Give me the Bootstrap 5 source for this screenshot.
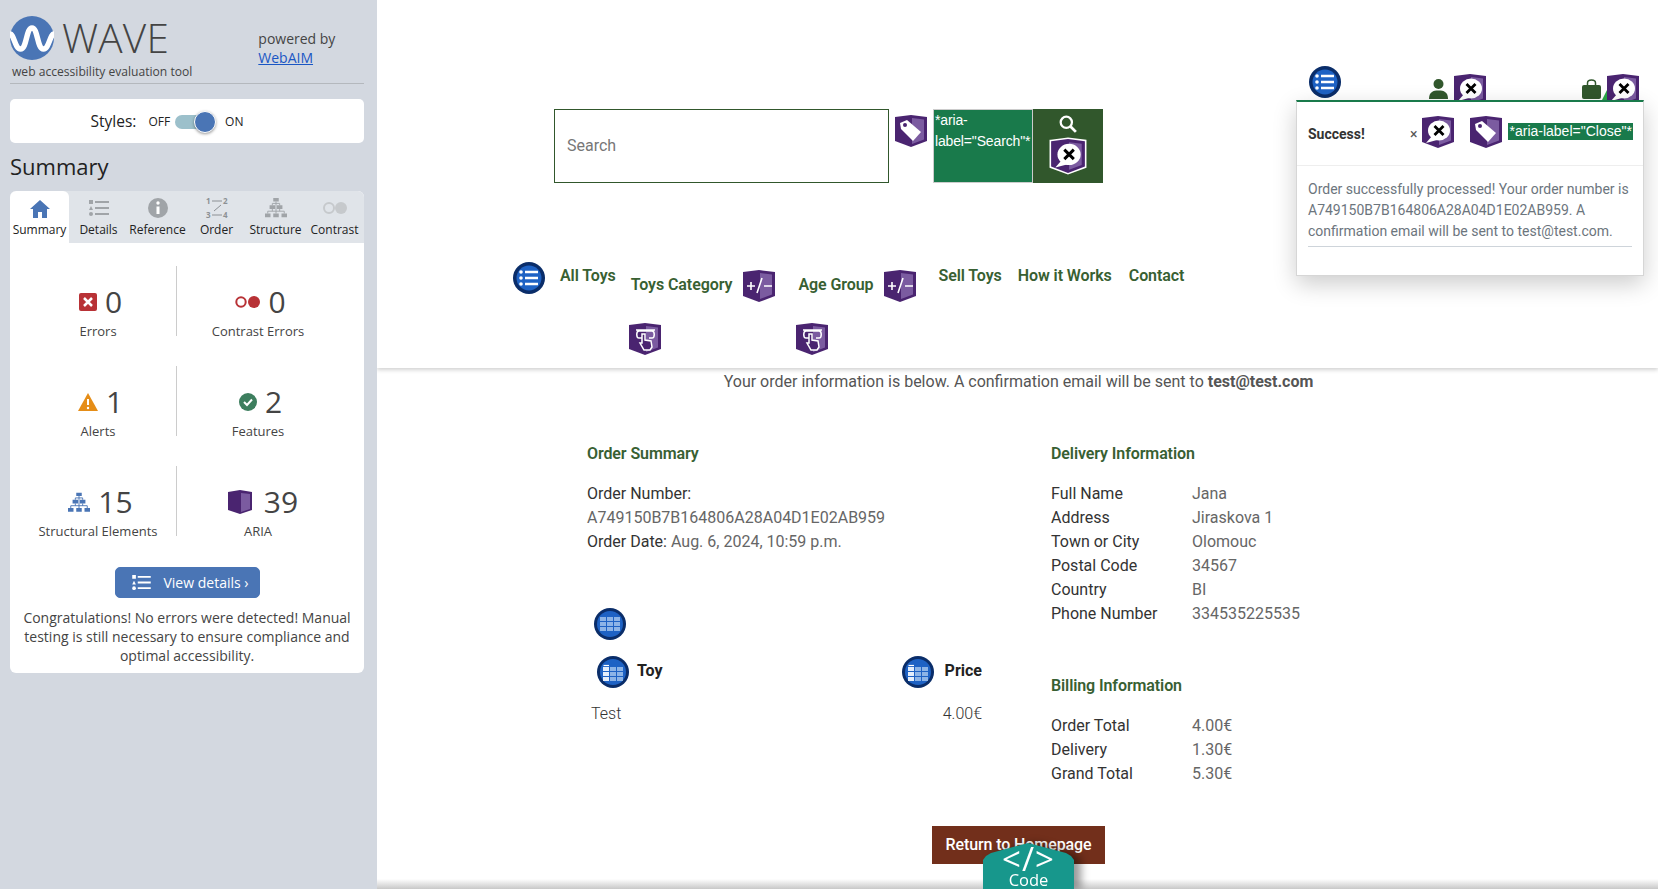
<!DOCTYPE html>
<html lang="en">
<head>
    <meta charset="UTF-8">
    <meta name="viewport" content="width=device-width, initial-scale=1.0">
    <title>Order confirmation - WAVE</title>
    <link href="https://cdn.jsdelivr.net/npm/bootstrap@5.3.0/dist/css/bootstrap.min.css" rel="stylesheet">
    <style>
        html, body { height: 100%; overflow: hidden; }
        body { font-family: Roboto, "Liberation Sans", sans-serif; color: #555; background: #fff; }

        /* WAVE sidebar */
        .wave-side { width: 377px; height: 889px; flex: none; background: #d3d8e0; padding: 0 13px 0 10px; font-family: "Open Sans", "Liberation Sans", sans-serif; color: #333; }
        .wave-brand { height: 84px; border-bottom: 1px solid #b4b8bd; position: relative; }
        .wave-logo { padding-top: 15px; }
        .wave-name { font-size: 40.500px; font-weight: 300; line-height: 44px; color: #444; margin: 1px 0 0 8px; letter-spacing: .2px; }
        .wave-sub { font-size: 12.100px; line-height: 16px; color: #444; margin: -4px 0 0 2px; }
        .wave-power { margin-left: 66px; padding-top: 29px; font-size: 14px; line-height: 19px; color: #444; }
        .wave-power a { color: #1a56c4; }
        .style-box { height: 44px; margin-top: 15px; padding: 1px 40px 0 0; background: #fff; border-radius: 5px; font-size: 12px; color: #222; }
        .style-box .lbl { font-size: 15.500px; margin-right: 12px; }
        .switch-track { width: 29px; height: 14px; margin: 0 21px 0 5px; background: #9cc0cb; border-radius: 7px; position: relative; }
        .switch-knob { position: absolute; right: -12px; top: -4px; width: 22px; height: 22px; border-radius: 50%; background: #4a75b5; border: 1px solid #fff; box-shadow: 0 1px 3px rgba(0,0,0,.4); }
        .side-title { font-size: 22px; font-weight: 400; line-height: 30px; margin: 8px 0 10px; color: #222; }
        .side-panel { background: #fff; border-radius: 6px; height: 482px; overflow: hidden; }
        .tab-strip { height: 52px; background: #e0e4e9; }
        .tab-item { width: 59px; text-align: center; font-size: 12px; line-height: 16px; color: #222; padding-top: 6px; white-space: nowrap; }
        .tab-item svg { display: block; margin: 0 auto 3px; height: 22px; }
        .tab-item.is-on { background: #fff; border-radius: 6px 6px 0 0; }
        .stat-grid { display: grid; grid-template-columns: 157px 162px; grid-auto-rows: 70px; row-gap: 30px; margin: 23px 0 0 10px; }
        .stat-cell { text-align: center; font-size: 13px; color: #444; }
        .stat-cell:nth-child(odd) { border-right: 1px solid #ccc; }
        .stat-num { display: flex; justify-content: center; align-items: center; gap: 8px; padding-left: 5px; font-size: 30px; line-height: 40px; margin-top: 16px; color: #444; height: 40px; }
        .stat-num.wide-mark { padding-left: 10px; }
        .stat-lbl { line-height: 16px; margin-top: 1px; }
        .btn-details { width: 145px; height: 31px; margin: 31px auto 0; padding: 0 0 1px 7px; background: #4a75b5; border-color: #4a75b5; color: #fff; font-size: 14px; border-radius: 5px; gap: 12px; }
        .side-note { font-size: 14px; line-height: 19px; text-align: center; margin: 10px 10px 0; color: #444; }

        /* page */
        .page-main { flex: 1; height: 889px; overflow: hidden; position: relative; }
        .page-head { height: 368px; box-shadow: 0 2px 4px rgba(0,0,0,.18); }
        .top-row { height: 109px; padding: 66px 0 0 932px; }
        .top-user { margin-left: 88px; padding-top: 13px; }
        .top-bag { margin-left: 96px; padding-top: 13px; position: relative; }
        .top-user .top-mark, .top-bag .top-mark { margin: -5px 0 0 6px; }
        .bag-pointer { position: absolute; left: 20px; top: 24px; }
        .search-row { margin-left: 177px; height: 74px; }
        .search-field { width: 335px; height: 74px; border: 1px solid #31572c; border-radius: 0; padding: 0 0 1px 12px; font-size: 16px; }
        .search-field::placeholder { color: #777; }
        .search-tag { margin: 6px; flex: none; }
        .aria-text { background: #197a4b; color: #fff; font-family: "Liberation Sans", sans-serif; font-size: 14px; letter-spacing: -.15px; }
        .aria-box { width: 100px; height: 74px; border: 1px solid #ccc; line-height: 21px; padding: 0 0 0 1px; overflow: hidden; }
        .search-btn { width: 70px; height: 74px; padding: 6px 0 0; border: 0; border-radius: 0; background: #31572c; }
        .site-nav { margin: 80px 0 0 136px; color: #386032; font-size: 16px; font-weight: 600; letter-spacing: -.08px; }
        .site-nav a { color: inherit; text-decoration: none; white-space: nowrap; }
        .nav-icon { margin-top: -1px; }
        .nav-text { line-height: 24px; padding-top: 1px; }
        .nav-drop { padding-top: 7px; }
        .nav-drop .nav-text { padding-top: 3px; }
        .nav-mark { margin-left: 11px; }
        .menu-mark { margin: 21px 0 0 -2px; }

        .intro-line { line-height: 24px; padding: 2px 0 0 2px; }
        .order-wrap { padding-left: 210px; margin-top: 48px; }
        .block-title { color: #386032; font-size: 16px; font-weight: 600; letter-spacing: -.1px; line-height: 24px; margin: 0 0 16px; }
        .order-lines { line-height: 24px; width: 300px; margin: 0; color: #666; }
        .order-lines b, .info-grid dt { font-weight: 400; color: #333; }
        .info-grid { display: grid; grid-template-columns: 141px auto; line-height: 24px; margin: 0; color: #666; }
        .info-grid dt, .info-grid dd { margin: 0; }
        .toy-table { width: 395px; margin-top: 16px; }
        .toy-table th { padding: 0 0 0 10px; height: 32px; color: #222; font-weight: 700; white-space: nowrap; }
        .toy-table td { padding: 14px 0 0 4px; line-height: 24px; font-weight: 300; color: #333; }
        .price-mark { margin-right: 11px; }
        .return-wrap { padding-left: 2px; }
        .return-btn { width: 173px; height: 38px; padding: 0; border: 0; border-radius: 0; background: #722f1b; color: #fff; font-size: 16px; font-weight: 500; letter-spacing: -.1px; margin-top: 40px; }

        /* overlays */
        .order-toast { position: absolute; left: 919px; top: 100px; width: 348px; height: 176px; background: #fff; border: 1px solid #d6d6d6; border-top: 2px solid #197a4b; border-radius: 0; box-shadow: 0 8px 22px rgba(0,0,0,.2); z-index: 5; font-size: 14px; }
        .order-toast .toast-header { height: 64px; padding: 1px 0 0 11px; color: #333; border-bottom: 1px solid #eee; border-radius: 0; background: #fff; }
        .order-toast .toast-header svg { margin-top: -4px; }
        .toast-title { width: 102px; }
        .toast-x { font-size: 14px; color: #555; margin: 0 5px 0 0; }
        .close-label { height: 17px; line-height: 16px; padding: 0 1px; margin: -5px 0 0 6px; white-space: nowrap; letter-spacing: 0; }
        .toast-copy { margin: 13px 11px 0; padding-bottom: 4px; line-height: 21px; color: #6c757d; border-bottom: 1px solid #ced4da; }
        .foot-fade { position: absolute; left: 0; right: 0; bottom: 0; height: 10px; background: linear-gradient(#fff, #c8c8c8); }
        .code-shadow { position: absolute; left: 606px; bottom: 0; filter: drop-shadow(7px 0 4px rgba(0,0,0,.4)); z-index: 4; }
        .code-tab { width: 91px; height: 46px; padding-top: 4px; background: #17978c; color: #fff; text-align: center; font-family: "Open Sans", sans-serif; clip-path: polygon(0 17px, 3px 13px, 8px 10px, 45px 0, 83px 10px, 88px 13px, 91px 17px, 91px 46px, 0 46px); }
        .code-mark { font-size: 33px; line-height: 24px; height: 24px; letter-spacing: 1px; }
        .code-word { font-size: 16.500px; line-height: 17px; }
    </style>
</head>
<body>
    <svg width="0" height="0" class="position-absolute">
        <defs>
            <g id="shield">
                <path d="M0 2 16 0 32 2V26L16 32 0 26Z" fill="#4a2470"/>
                <path d="M17 3 29 4.500V24.500L17 29Z" fill="#7b5ba0"/>
            </g>
            <symbol id="aria-tag" viewBox="0 0 32 32">
                <use href="#shield"/>
                <path d="M5 8 12 5 26 17 18 26 6 14Z" fill="#fff"/>
                <circle cx="10" cy="10" r="2" fill="#4a2470"/>
            </symbol>
            <symbol id="aria-close" viewBox="0 0 32 32">
                <use href="#shield"/>
                <ellipse cx="17" cy="14.500" rx="11" ry="10" fill="#fff"/>
                <path d="M10 20 4 27 15 24Z" fill="#fff"/>
                <path d="M12.500 10 21.500 19M21.500 10 12.500 19" stroke="#000" stroke-width="2.800"/>
            </symbol>
            <symbol id="aria-expand" viewBox="0 0 32 32">
                <use href="#shield"/>
                <path d="M4 16H12M8 12V20M14 23 19 8M21 16H29" stroke="#fff" stroke-width="1.600" fill="none"/>
            </symbol>
            <symbol id="aria-menu" viewBox="0 0 32 32">
                <use href="#shield"/>
                <path d="M13 15H10C7 15 7 8 10 8H23C26 8 26 15 23 15H20M7 7H26" stroke="#fff" stroke-width="1.500" fill="none"/>
                <path d="M13 11 16 11V17L22 18 23 24 21 27H15L11 20 13 20Z" fill="#4a2470" stroke="#fff" stroke-width="1.500"/>
            </symbol>
            <symbol id="blue-list" viewBox="0 0 32 32">
                <circle cx="16" cy="16" r="16" fill="#0a2d69"/>
                <circle cx="16" cy="16" r="12.500" fill="#1e62c4"/>
                <path d="M12 10H25M12 16H25M12 22H25" stroke="#fff" stroke-width="2.400"/>
                <circle cx="8" cy="10" r="1.800" fill="#fff"/>
                <circle cx="8" cy="16" r="1.800" fill="#fff"/>
                <circle cx="8" cy="22" r="1.800" fill="#fff"/>
            </symbol>
            <symbol id="blue-table" viewBox="0 0 32 32">
                <circle cx="16" cy="16" r="16" fill="#0a2d69"/>
                <circle cx="16" cy="16" r="13" fill="#1e62c4"/>
                <path d="M6 9H12V13H6ZM13 9H19V13H13ZM20 9H26V13H20ZM6 14H12V18H6ZM13 14H19V18H13ZM20 14H26V18H20ZM6 19H12V23H6ZM13 19H19V23H13ZM20 19H26V23H20Z" fill="#8db4e6"/>
            </symbol>
            <symbol id="blue-th" viewBox="0 0 32 32">
                <circle cx="16" cy="16" r="16" fill="#0a2d69"/>
                <circle cx="16" cy="16" r="13" fill="#1e62c4"/>
                <path d="M13 11H19V15H13ZM20 11H26V15H20ZM13 16H19V20H13ZM20 16H26V20H20ZM13 21H19V25H13ZM20 21H26V25H20Z" fill="#8db4e6"/>
                <path d="M6 11H12V15H6ZM6 16H12V20H6ZM6 21H12V25H6Z" fill="#e4eefb"/>
                <path d="M6.500 9.500H12" stroke="#fff" stroke-width="1.200"/>
            </symbol>
            <symbol id="list-lines" viewBox="0 0 20 16">
                <path d="M6 2H20M6 8H20M6 14H20" stroke="currentColor" stroke-width="2"/>
                <rect x="0" y="0" width="4" height="4" fill="currentColor"/>
                <path d="M2 6 4 10H0Z" fill="currentColor"/>
                <circle cx="2" cy="14" r="2" fill="currentColor"/>
            </symbol>
            <symbol id="tree" viewBox="0 0 24 22">
                <path d="M9 0H15V4H9ZM5 8H11V12H5ZM13 8H19V12H13ZM0 17H6V21H0ZM9 17H15V21H9ZM18 17H24V21H18Z" fill="currentColor"/>
                <path d="M12 4V17M8 8V6H16V8M3 17V14.500H21V17M8 12V14.500M16 12V14.500" stroke="currentColor" stroke-width="1" fill="none"/>
            </symbol>
        </defs>
    </svg>

    <div class="d-flex">
        <aside class="wave-side">
            <div class="wave-brand d-flex">
                <div class="wave-logo">
                    <div class="d-flex align-items-center">
                        <svg width="44" height="44" viewBox="0 0 44 44"><circle cx="22" cy="22" r="22" fill="#4a75b5"/><path d="M0 18C4 18 5 33 10.500 33 17 33 16 12 22 12 28 12 27 33 33.500 33 39 33 40 18 44 18" fill="none" stroke="#fff" stroke-width="5.500"/></svg>
                        <span class="wave-name">WAVE</span>
                    </div>
                    <div class="wave-sub mt-1">web accessibility evaluation tool</div>
                </div>
                <div class="wave-power">powered by<br><a href="#">WebAIM</a></div>
            </div>

            <div class="style-box d-flex align-items-center justify-content-center">
                <span class="lbl">Styles:</span>
                <span>OFF</span>
                <span class="switch-track"><span class="switch-knob"></span></span>
                <span>ON</span>
            </div>

            <h2 class="side-title">Summary</h2>

            <div class="side-panel">
                <div class="tab-strip d-flex">
                    <div class="tab-item is-on">
                        <svg width="20" viewBox="0 0 20 22"><path d="M10 3 0 12H3V21H8V15H12V21H17V12H20Z" fill="#4a75b5"/></svg>
                        Summary
                    </div>
                    <div class="tab-item">
                        <svg width="20" viewBox="0 0 20 22" color="#a0a4a8"><use href="#list-lines" y="3" width="20" height="16"/></svg>
                        Details
                    </div>
                    <div class="tab-item">
                        <svg width="22" viewBox="0 0 22 22"><circle cx="11" cy="11" r="10" fill="#a0a4a8"/><path d="M11 9.500V17" stroke="#fff" stroke-width="3"/><circle cx="11" cy="6" r="1.700" fill="#fff"/></svg>
                        Reference
                    </div>
                    <div class="tab-item">
                        <svg width="24" viewBox="0 0 24 22" font-family="Open Sans" font-size="8" font-weight="700" fill="#8c9094"><text x="1" y="7">1</text><text x="18" y="7">2</text><text x="1" y="21">3</text><text x="18" y="21">4</text><path d="M7 4H17M17 18H7M16 8 9 14" stroke="#8c9094" fill="none"/></svg>
                        Order
                    </div>
                    <div class="tab-item">
                        <svg width="22" viewBox="0 0 24 22" color="#a0a4a8"><use href="#tree"/></svg>
                        Structure
                    </div>
                    <div class="tab-item">
                        <svg width="26" viewBox="0 0 26 22"><circle cx="7" cy="11" r="5" fill="none" stroke="#c6c9cc" stroke-width="2"/><circle cx="19" cy="11" r="6" fill="#c6c9cc"/></svg>
                        Contrast
                    </div>
                </div>

                <div class="stat-grid">
                    <div class="stat-cell">
                        <div class="stat-num"><svg width="18" height="18" viewBox="0 0 18 18"><rect width="18" height="18" rx="2" fill="#b83236"/><path d="M5 5 13 13M13 5 5 13" stroke="#fff" stroke-width="2.500"/></svg>0</div>
                        <div class="stat-lbl">Errors</div>
                    </div>
                    <div class="stat-cell">
                        <div class="stat-num"><svg width="25" height="12" viewBox="0 0 25 12"><circle cx="6" cy="6" r="4.700" fill="none" stroke="#b83236" stroke-width="2"/><circle cx="19" cy="6" r="6" fill="#b83236"/></svg>0</div>
                        <div class="stat-lbl">Contrast Errors</div>
                    </div>
                    <div class="stat-cell">
                        <div class="stat-num"><svg width="20" height="18" viewBox="0 0 20 18"><path d="M10 0 20 18H0Z" fill="#e58d17"/><path d="M10 6V12" stroke="#fff" stroke-width="2"/><circle cx="10" cy="15" r="1.200" fill="#fff"/></svg>1</div>
                        <div class="stat-lbl">Alerts</div>
                    </div>
                    <div class="stat-cell">
                        <div class="stat-num"><svg width="18" height="18" viewBox="0 0 18 18"><circle cx="9" cy="9" r="9" fill="#3d7e5e"/><path d="M5 9 8 12 13 6.500" fill="none" stroke="#fff" stroke-width="2"/></svg>2</div>
                        <div class="stat-lbl">Features</div>
                    </div>
                    <div class="stat-cell">
                        <div class="stat-num"><svg width="22" height="21" viewBox="0 0 24 22" color="#4a75b5"><use href="#tree"/></svg>15</div>
                        <div class="stat-lbl">Structural Elements</div>
                    </div>
                    <div class="stat-cell">
                        <div class="stat-num wide-mark"><svg width="24" height="24" viewBox="0 0 24 24"><path d="M0 2 12 0 24 2V20L12 24 0 20Z" fill="#4a2470"/><path d="M13 3 22 4V19L13 22Z" fill="#7b5ba0"/></svg><span class="ms-1">39</span></div>
                        <div class="stat-lbl">ARIA</div>
                    </div>
                </div>

                <button type="button" class="btn btn-details d-flex align-items-center justify-content-center">
                    <svg width="19" height="15" viewBox="0 0 20 16" color="#fff"><use href="#list-lines"/></svg>
                    View details ›
                </button>
                <p class="side-note">Congratulations! No errors were detected! Manual testing is still necessary to ensure compliance and optimal accessibility.</p>
            </div>
        </aside>

        <main class="page-main">
            <header class="page-head">
                <div class="top-row d-flex">
                    <svg width="32" height="32"><use href="#blue-list"/></svg>
                    <div class="top-user d-flex">
                        <svg width="19" height="20" viewBox="0 0 19 20"><circle cx="9.500" cy="5" r="5" fill="#31572c"/><path d="M0 20C0 13 4 11.500 9.500 11.500S19 13 19 20Z" fill="#31572c"/></svg>
                        <svg class="top-mark" width="32" height="32"><use href="#aria-close"/></svg>
                    </div>
                    <div class="top-bag d-flex">
                        <svg width="19" height="20" viewBox="0 0 19 20"><path d="M5.500 7V4C5.500 0 13.500 0 13.500 4V7" fill="none" stroke="#31572c" stroke-width="1.500"/><rect y="6" width="19" height="14" rx="2" fill="#31572c"/></svg>
                        <svg class="bag-pointer" width="10" height="10" viewBox="0 0 10 10"><path d="M5 0 10 10H0Z" fill="#28a745"/></svg>
                        <svg class="top-mark position-relative" width="32" height="32"><use href="#aria-close"/></svg>
                    </div>
                </div>

                <form class="search-row d-flex">
                    <input type="text" class="form-control search-field" placeholder="Search">
                    <svg class="search-tag" width="32" height="32"><use href="#aria-tag"/></svg>
                    <div class="aria-text aria-box">*aria-label="Search"*</div>
                    <button type="button" class="btn search-btn d-flex flex-column align-items-center">
                        <svg width="18" height="18" viewBox="0 0 16 16"><circle cx="6.500" cy="6.500" r="5" fill="none" stroke="#fff" stroke-width="2"/><path d="M10 10 15 15" stroke="#fff" stroke-width="2.500"/></svg>
                        <svg class="mt-1" width="38" height="38" viewBox="-2 -2 36 36"><path d="M0 2 16 0 32 2V26L16 32 0 26Z" fill="#4a2470" stroke="#fff" stroke-width="3"/><use href="#aria-close" width="32" height="32"/></svg>
                    </button>
                </form>

                <nav class="site-nav d-flex">
                    <svg class="nav-icon" width="32" height="32"><use href="#blue-list"/></svg>
                    <a href="#" class="nav-text" style="margin-left:15px">All Toys</a>
                    <div class="nav-drop d-flex flex-column" style="margin-left:15px">
                        <div class="d-flex"><a href="#" class="nav-text">Toys Category</a><svg class="nav-mark" width="32" height="32"><use href="#aria-expand"/></svg></div>
                        <svg class="menu-mark" width="32" height="32"><use href="#aria-menu"/></svg>
                    </div>
                    <div class="nav-drop d-flex flex-column" style="margin-left:23px">
                        <div class="d-flex"><a href="#" class="nav-text">Age Group</a><svg class="nav-mark" width="32" height="32"><use href="#aria-expand"/></svg></div>
                        <svg class="menu-mark" width="32" height="32"><use href="#aria-menu"/></svg>
                    </div>
                    <a href="#" class="nav-text" style="margin-left:22px">Sell Toys</a>
                    <a href="#" class="nav-text ms-3">How it Works</a>
                    <a href="#" class="nav-text" style="margin-left:17px">Contact</a>
                </nav>
            </header>

            <p class="intro-line text-center mb-0 mt-0">Your order information is below. A confirmation email will be sent to <strong>test@test.com</strong></p>

            <div class="order-wrap d-flex">
                <section style="width:464px">
                    <h3 class="block-title">Order Summary</h3>
                    <p class="order-lines"><b>Order Number:</b><br>A749150B7B164806A28A04D1E02AB959<br><b>Order Date:</b> Aug. 6, 2024, 10:59 p.m.</p>
                    <div style="margin:54px 0 0 7px;height:32px"><svg width="32" height="32"><use href="#blue-table"/></svg></div>
                    <table class="toy-table">
                        <thead>
                            <tr>
                                <th><svg class="me-2 align-middle" width="32" height="32"><use href="#blue-th"/></svg>Toy</th>
                                <th class="text-end"><svg class="price-mark align-middle" width="32" height="32"><use href="#blue-th"/></svg>Price</th>
                            </tr>
                        </thead>
                        <tbody>
                            <tr><td>Test</td><td class="text-end">4.00€</td></tr>
                        </tbody>
                    </table>
                </section>
                <section>
                    <h3 class="block-title">Delivery Information</h3>
                    <dl class="info-grid">
                        <dt>Full Name</dt><dd>Jana</dd>
                        <dt>Address</dt><dd>Jiraskova 1</dd>
                        <dt>Town or City</dt><dd>Olomouc</dd>
                        <dt>Postal Code</dt><dd>34567</dd>
                        <dt>Country</dt><dd>BI</dd>
                        <dt>Phone Number</dt><dd>334535225535</dd>
                    </dl>
                    <h3 class="block-title" style="margin-top:48px">Billing Information</h3>
                    <dl class="info-grid">
                        <dt>Order Total</dt><dd>4.00€</dd>
                        <dt>Delivery</dt><dd>1.30€</dd>
                        <dt>Grand Total</dt><dd>5.30€</dd>
                    </dl>
                </section>
            </div>

            <div class="return-wrap d-flex justify-content-center">
                <button type="button" class="btn return-btn">Return to Homepage</button>
            </div>

            <div class="order-toast toast show" role="alert">
                <div class="toast-header">
                    <strong class="toast-title">Success!</strong>
                    <span class="toast-x">×</span>
                    <svg width="32" height="32"><use href="#aria-close"/></svg>
                    <svg style="margin-left:16px" width="32" height="32"><use href="#aria-tag"/></svg>
                    <span class="aria-text close-label">*aria-label="Close"*</span>
                </div>
                <div class="toast-copy">Order successfully processed! Your order number is A749150B7B164806A28A04D1E02AB959. A confirmation email will be sent to test@test.com.</div>
            </div>

            <div class="foot-fade"></div>
            <div class="code-shadow">
                <div class="code-tab">
                    <div class="code-mark">&lt;/&gt;</div>
                    <div class="code-word">Code</div>
                </div>
            </div>
        </main>
    </div>

    <script src="https://cdn.jsdelivr.net/npm/bootstrap@5.3.0/dist/js/bootstrap.bundle.min.js"></script>
</body>
</html>
